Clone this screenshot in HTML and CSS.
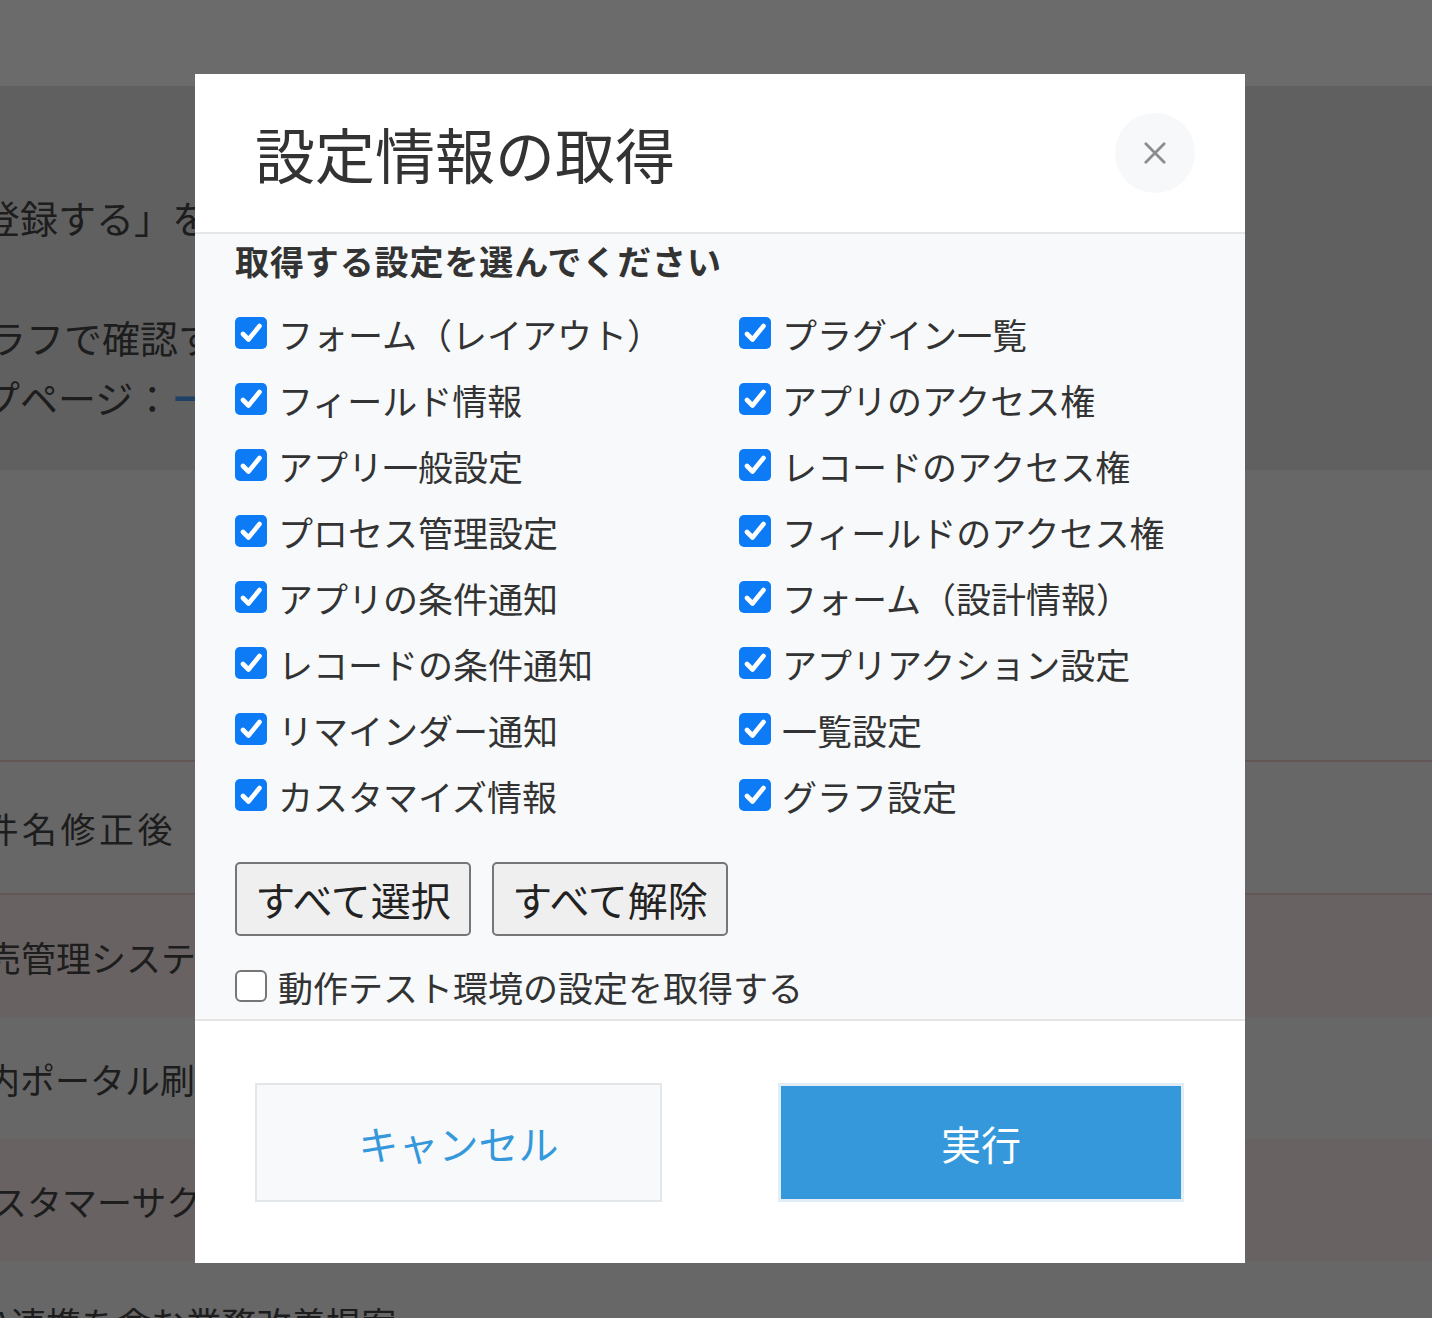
FILE: index.html
```html
<!DOCTYPE html>
<html lang="ja">
<head>
<meta charset="utf-8">
<title>設定情報の取得</title>
<link rel="stylesheet" href="styles.css">
</head>
<body>
<div class="page">
  <header class="topbar"></header>
  <section class="intro">
    <p class="line shift-a">登録する」をクリックしてください</p>
    <p class="line blank"></p>
    <p class="line shift-b">グラフで確認することができます</p>
    <p class="line shift-c">トップページ：<a class="link" href="#">━https://example.cybozu.com</a></p>
  </section>
  <section class="spacer"></section>
  <div class="table">
    <div class="row first"><span class="cell spaced shift-d">案件名修正後</span></div>
    <div class="row tint"><span class="cell shift-e">販売管理システム導入</span></div>
    <div class="row"><span class="cell shift-f">社内ポータル刷新</span></div>
    <div class="row tint"><span class="cell shift-g">カスタマーサクセス施策</span></div>
    <div class="row"><span class="cell shift-h">A連携を含む業務改善提案</span></div>
  </div>
</div>

<div class="overlay"></div>

<div class="modal" role="dialog" aria-labelledby="modal-title">
  <div class="modal-head">
    <h1 id="modal-title" class="modal-title">設定情報の取得</h1>
    <button class="close" type="button" aria-label="閉じる">
      <svg width="24" height="24" viewBox="0 0 24 24"><path d="M2 2 L22 22 M22 2 L2 22" stroke="#8c8c8c" stroke-width="3" stroke-linecap="round"/></svg>
    </button>
  </div>

  <div class="modal-body">
    <h2 class="subtitle">取得する設定を選んでください</h2>
    <div class="options">
      <label class="opt"><input type="checkbox" checked><span class="box"><svg viewBox="0 0 32 32"><path d="M8 17 L13.5 22.5 L24.5 9" fill="none" stroke="#fff" stroke-width="4.6" stroke-linecap="round" stroke-linejoin="round"/></svg></span>フォーム（レイアウト）</label>
      <label class="opt"><input type="checkbox" checked><span class="box"><svg viewBox="0 0 32 32"><path d="M8 17 L13.5 22.5 L24.5 9" fill="none" stroke="#fff" stroke-width="4.6" stroke-linecap="round" stroke-linejoin="round"/></svg></span>プラグイン一覧</label>
      <label class="opt"><input type="checkbox" checked><span class="box"><svg viewBox="0 0 32 32"><path d="M8 17 L13.5 22.5 L24.5 9" fill="none" stroke="#fff" stroke-width="4.6" stroke-linecap="round" stroke-linejoin="round"/></svg></span>フィールド情報</label>
      <label class="opt"><input type="checkbox" checked><span class="box"><svg viewBox="0 0 32 32"><path d="M8 17 L13.5 22.5 L24.5 9" fill="none" stroke="#fff" stroke-width="4.6" stroke-linecap="round" stroke-linejoin="round"/></svg></span>アプリのアクセス権</label>
      <label class="opt"><input type="checkbox" checked><span class="box"><svg viewBox="0 0 32 32"><path d="M8 17 L13.5 22.5 L24.5 9" fill="none" stroke="#fff" stroke-width="4.6" stroke-linecap="round" stroke-linejoin="round"/></svg></span>アプリ一般設定</label>
      <label class="opt"><input type="checkbox" checked><span class="box"><svg viewBox="0 0 32 32"><path d="M8 17 L13.5 22.5 L24.5 9" fill="none" stroke="#fff" stroke-width="4.6" stroke-linecap="round" stroke-linejoin="round"/></svg></span>レコードのアクセス権</label>
      <label class="opt"><input type="checkbox" checked><span class="box"><svg viewBox="0 0 32 32"><path d="M8 17 L13.5 22.5 L24.5 9" fill="none" stroke="#fff" stroke-width="4.6" stroke-linecap="round" stroke-linejoin="round"/></svg></span>プロセス管理設定</label>
      <label class="opt"><input type="checkbox" checked><span class="box"><svg viewBox="0 0 32 32"><path d="M8 17 L13.5 22.5 L24.5 9" fill="none" stroke="#fff" stroke-width="4.6" stroke-linecap="round" stroke-linejoin="round"/></svg></span>フィールドのアクセス権</label>
      <label class="opt"><input type="checkbox" checked><span class="box"><svg viewBox="0 0 32 32"><path d="M8 17 L13.5 22.5 L24.5 9" fill="none" stroke="#fff" stroke-width="4.6" stroke-linecap="round" stroke-linejoin="round"/></svg></span>アプリの条件通知</label>
      <label class="opt"><input type="checkbox" checked><span class="box"><svg viewBox="0 0 32 32"><path d="M8 17 L13.5 22.5 L24.5 9" fill="none" stroke="#fff" stroke-width="4.6" stroke-linecap="round" stroke-linejoin="round"/></svg></span>フォーム（設計情報）</label>
      <label class="opt"><input type="checkbox" checked><span class="box"><svg viewBox="0 0 32 32"><path d="M8 17 L13.5 22.5 L24.5 9" fill="none" stroke="#fff" stroke-width="4.6" stroke-linecap="round" stroke-linejoin="round"/></svg></span>レコードの条件通知</label>
      <label class="opt"><input type="checkbox" checked><span class="box"><svg viewBox="0 0 32 32"><path d="M8 17 L13.5 22.5 L24.5 9" fill="none" stroke="#fff" stroke-width="4.6" stroke-linecap="round" stroke-linejoin="round"/></svg></span>アプリアクション設定</label>
      <label class="opt"><input type="checkbox" checked><span class="box"><svg viewBox="0 0 32 32"><path d="M8 17 L13.5 22.5 L24.5 9" fill="none" stroke="#fff" stroke-width="4.6" stroke-linecap="round" stroke-linejoin="round"/></svg></span>リマインダー通知</label>
      <label class="opt"><input type="checkbox" checked><span class="box"><svg viewBox="0 0 32 32"><path d="M8 17 L13.5 22.5 L24.5 9" fill="none" stroke="#fff" stroke-width="4.6" stroke-linecap="round" stroke-linejoin="round"/></svg></span>一覧設定</label>
      <label class="opt"><input type="checkbox" checked><span class="box"><svg viewBox="0 0 32 32"><path d="M8 17 L13.5 22.5 L24.5 9" fill="none" stroke="#fff" stroke-width="4.6" stroke-linecap="round" stroke-linejoin="round"/></svg></span>カスタマイズ情報</label>
      <label class="opt"><input type="checkbox" checked><span class="box"><svg viewBox="0 0 32 32"><path d="M8 17 L13.5 22.5 L24.5 9" fill="none" stroke="#fff" stroke-width="4.6" stroke-linecap="round" stroke-linejoin="round"/></svg></span>グラフ設定</label>
    </div>
    <div class="bulk">
      <button type="button" class="bulk-btn">すべて選択</button>
      <button type="button" class="bulk-btn">すべて解除</button>
    </div>
    <label class="opt test"><input type="checkbox"><span class="box empty"></span>動作テスト環境の設定を取得する</label>
  </div>

  <div class="modal-foot">
    <button type="button" class="btn cancel">キャンセル</button>
    <button type="button" class="btn run">実行</button>
  </div>
</div>
</body>
</html>
```

FILE: styles.css
```css
html, body {
  margin: 0;
  padding: 0;
}
body {
  width: 1432px;
  height: 1318px;
  overflow: hidden;
  position: relative;
  font-family: "Noto Sans CJK JP", "Noto Sans", sans-serif;
  background: #ffffff;
}

/* ---------- background page ---------- */
.page {
  width: 1432px;
  overflow: hidden;
}
.topbar {
  height: 86px;
  background: #ffffff;
}
.intro {
  height: 384px;
  box-sizing: border-box;
  padding-top: 101px;
  background: #e5e5e5;
}
.line {
  margin: 0;
  height: 60px;
  line-height: 60px;
  font-size: 38px;
  color: #474747;
  white-space: nowrap;
}
.link {
  color: #4a9cf0;
  text-decoration: none;
  font-weight: bold;
  margin-left: 4px;
}
.spacer {
  height: 290px;
  background: #f6f6f6;
}
.row {
  height: 122px;
  display: flex;
  align-items: center;
  background: #f6f6f6;
}
.row.first {
  height: 135px;
  box-sizing: border-box;
  border-top: 2px solid #f0cccc;
  border-bottom: 2px solid #f0cccc;
}
.row.tint {
  background: #f7eaea;
}
.cell {
  font-size: 35px;
  color: #474747;
  white-space: nowrap;
}
.cell.spaced {
  letter-spacing: 3.5px;
}
.shift-a { margin-left: -18px; }
.shift-b { margin-left: -50px; }
.shift-c { margin-left: -94px; }
.shift-d { margin-left: -55px; }
.shift-e { margin-left: -49px; }
.shift-f { margin-left: -50px; }
.shift-g { margin-left: -43px; }
.shift-h { margin-left: -10px; }

.overlay {
  position: absolute;
  inset: 0;
  background: rgba(0, 0, 0, 0.58);
}

/* ---------- modal ---------- */
.modal {
  position: absolute;
  left: 195px;
  top: 74px;
  width: 1050px;
  height: 1189px;
  background: #ffffff;
  display: flex;
  flex-direction: column;
}
.modal-head {
  height: 160px;
  box-sizing: border-box;
  display: flex;
  align-items: center;
  justify-content: space-between;
  padding: 0 50px 0 60px;
  border-bottom: 2px solid #e6e6e6;
}
.modal-title {
  margin: 0;
  font-size: 60px;
  font-weight: 400;
  line-height: 1;
  color: #333333;
}
.close {
  width: 80px;
  height: 80px;
  border: none;
  border-radius: 50%;
  background: #f6f8f9;
  display: flex;
  align-items: center;
  justify-content: center;
  padding: 0;
}
.close svg {
  width: 22px;
  height: 22px;
}

.modal-body {
  background: #f7f9fa;
  padding: 3px 40px 0;
  height: 785px;
  box-sizing: border-box;
}
.subtitle {
  margin: 0;
  font-size: 34px;
  font-weight: 700;
  line-height: 48px;
  color: #333333;
  letter-spacing: 0.9px;
}
.options {
  margin-top: 15px;
  display: grid;
  grid-template-columns: 504px 1fr;
  grid-auto-rows: 66px;
}
.opt {
  display: flex;
  align-items: center;
  font-size: 35px;
  color: #333333;
  white-space: nowrap;
  line-height: 1;
}
.opt input {
  display: none;
}
.box {
  width: 32px;
  height: 32px;
  flex: none;
  box-sizing: border-box;
  border-radius: 5px;
  background: #0d7bf5;
  margin-right: 11px;
  display: flex;
}
.box svg {
  width: 32px;
  height: 32px;
}
.box.empty {
  background: #ffffff;
  border: 2px solid #767676;
  border-radius: 6px;
}
.bulk {
  margin-top: 34px;
  display: flex;
  gap: 21px;
}
.bulk-btn {
  width: 236px;
  height: 74px;
  box-sizing: border-box;
  border: 2px solid #767676;
  border-radius: 5px;
  background: #efefef;
  font-family: inherit;
  font-size: 40px;
  line-height: 1;
  color: #222222;
  padding: 0;
}
.opt.test {
  margin-top: 18px;
  height: 64px;
}

.modal-foot {
  flex: 1;
  border-top: 2px solid #e6e6e6;
  padding: 62px 61px 0 60px;
  display: flex;
  justify-content: space-between;
  align-items: flex-start;
}
.btn {
  width: 407px;
  height: 119px;
  box-sizing: border-box;
  font-family: inherit;
  font-size: 40px;
  line-height: 1;
  padding: 0;
}
.btn.cancel {
  background: #f7f9fa;
  border: 2px solid #e3e7ea;
  color: #3498db;
}
.btn.run {
  width: 406px;
  background: #3498db;
  border: 3px solid #e3edf5;
  color: #ffffff;
}
```
